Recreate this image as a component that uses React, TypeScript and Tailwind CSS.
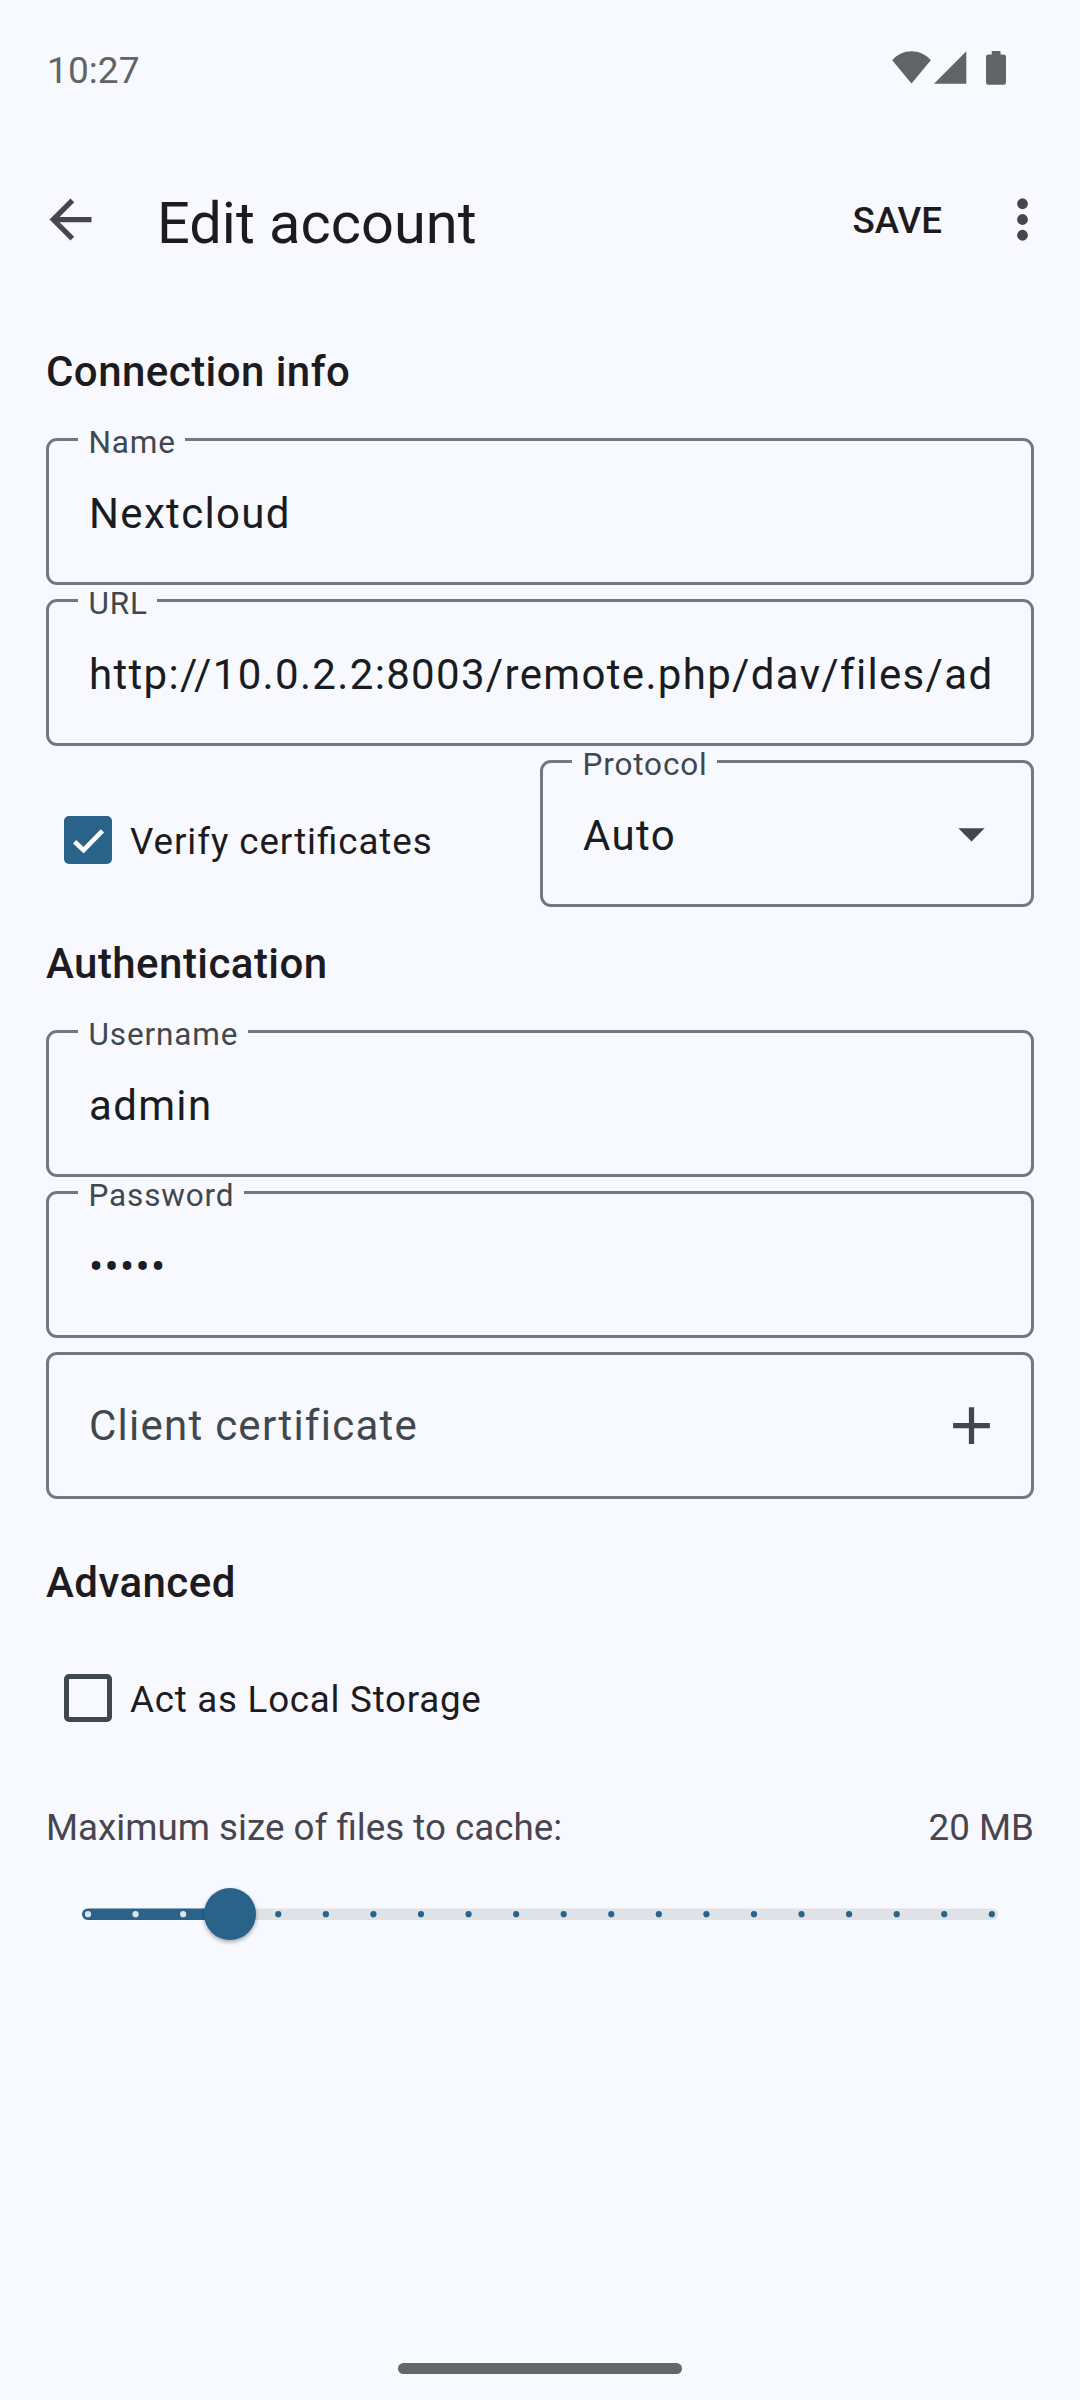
import type { ReactNode } from "react";

function Heading({ children, className = "" }: { children: ReactNode; className?: string }) {
  return (
    <h2 className={`h-[60px] text-[42px] leading-[60px] font-medium tracking-[0.45px] text-[#1d1b20] ${className}`}>
      {children}
    </h2>
  );
}

function Field({ label, children, className = "" }: { label?: string; children: ReactNode; className?: string }) {
  return (
    <div className={`relative flex h-[147px] items-center rounded-[11px] border-3 border-[#71787e] pt-1 pr-[39px] pl-10 ${className}`}>
      {label && (
        <span className="absolute top-[-10px] left-[29px] bg-[#f8f9ff] pr-[9.5px] pl-[10.5px] text-[31.5px] leading-6 tracking-[0.85px] text-[#41484d]">
          {label}
        </span>
      )}
      {children}
    </div>
  );
}

function Value({ children }: { children: ReactNode }) {
  return (
    <span className="flex-1 overflow-hidden text-[42px] leading-[60px] tracking-[1.33px] whitespace-nowrap text-[#191c20]">
      {children}
    </span>
  );
}

function CheckRow({ checked, children, className = "" }: { checked?: boolean; children: ReactNode; className?: string }) {
  return (
    <div className={`flex h-[126px] items-center pl-[18px] ${className}`}>
      {checked ? (
        <span className="flex size-12 items-center justify-center rounded-[5px] bg-[#29638a]">
          <svg width="31" height="24" viewBox="0 0 31 24" fill="none" className="mt-0.5">
            <path d="M1.6 12.8 L10.6 21.2 L29.4 1.8" stroke="white" strokeWidth="4.6" />
          </svg>
        </span>
      ) : (
        <span className="size-12 rounded-[5px] border-5 border-[#41484d]" />
      )}
      <span className="mt-[3px] ml-[18px] text-[36.75px] leading-[50px] text-[#1d1b20] [font-feature-settings:'liga'_1]">
        {children}
      </span>
    </div>
  );
}

const TICKS = Array.from({ length: 20 }, (_, i) => i);
const CURRENT = 3;
const tickX = (i: number) => 42 + i * 47.57;

export default function App() {
  return (
    <div className="flex h-[2400px] w-[1080px] flex-col bg-[#f8f9ff] font-[Roboto,sans-serif]">
      <div className="flex h-[140px] items-center pl-[47px] text-[#616466]">
        <span className="mt-0.5 text-[37px] leading-[50px] tracking-[0.1px]">10:27</span>
        <div className="-mt-1 mr-[74px] ml-auto flex items-center">
          <svg width="39" height="34" viewBox="0 0 39 34" fill="currentColor">
            <path d="M19.5 32.5 L0.2 9.2 C5.6 3.4 12.2 0.3 19.5 0.3 C26.8 0.3 33.4 3.4 38.8 9.2 Z" />
          </svg>
          <svg width="33" height="34" viewBox="0 0 33 34" fill="currentColor" className="ml-[3px]">
            <path d="M0 32.7 H32.3 V0.3 Z" />
          </svg>
          <svg width="20" height="34" viewBox="0 0 20 34" fill="currentColor" className="ml-[19px]">
            <path d="M5.7 0 H14.5 V3.4 H17.6 Q20 3.4 20 5.8 V31.4 Q20 33.8 17.6 33.8 H2.4 Q0 33.8 0 31.4 V5.8 Q0 3.4 2.4 3.4 H5.7 Z" />
          </svg>
        </div>
      </div>

      <div className="flex h-[158px] items-center pr-[26px] pl-10">
        <svg width="63" height="63" viewBox="0 0 24 24" fill="#49454f" className="-ml-px">
          <path d="M20 11H7.83l5.59-5.59L12 4l-8 8 8 8 1.41-1.41L7.83 13H20v-2z" />
        </svg>
        <h1 className="mt-[7px] ml-[55px] text-[57.75px] leading-[80px] text-[#1d1b20]">Edit account</h1>
        <span className="mt-1 ml-auto text-[36.75px] leading-[50px] font-medium text-[#1d1b20]">SAVE</span>
        <svg width="63" height="63" viewBox="0 0 24 24" fill="#49454f" className="ml-[49px]">
          <circle cx="12" cy="6" r="2.05" />
          <circle cx="12" cy="12" r="2.05" />
          <circle cx="12" cy="18" r="2.05" />
        </svg>
      </div>

      <div className="px-[46px]">
        <Heading className="mt-11 mb-9">Connection info</Heading>
        <div className="flex flex-col gap-[14px]">
          <Field label="Name"><Value>Nextcloud</Value></Field>
          <Field label="URL"><Value>http://10.0.2.2:8003/remote.php/dav/files/ad</Value></Field>
          <div className="grid grid-cols-2">
            <div className="flex items-center pt-[13px]">
              <CheckRow checked className="tracking-[0.93px]">Verify certificates</CheckRow>
            </div>
            <Field label="Protocol">
              <Value>Auto</Value>
              <svg width="63" height="63" viewBox="0 0 24 24" fill="#41484d" className="-mt-1 mr-[-11px]">
                <path d="M7 10l5 5 5-5z" />
              </svg>
            </Field>
          </div>
        </div>

        <Heading className="mt-[27px] mb-9">Authentication</Heading>
        <div className="flex flex-col gap-[14px]">
          <Field label="Username"><Value>admin</Value></Field>
          <Field label="Password"><Value>•••••</Value></Field>
          <Field>
            <span className="-mt-[3px] flex-1 text-[42px] leading-[60px] tracking-[1.25px] text-[#41484d]">Client certificate</span>
            <svg width="63" height="63" viewBox="0 0 24 24" fill="#41484d" className="-mt-1 mr-[-11px]">
              <path d="M19 13h-6v6h-2v-6H5v-2h6V5h2v6h6v2z" />
            </svg>
          </Field>
        </div>

        <Heading className="mt-[54px] mb-[22px]">Advanced</Heading>
        <CheckRow className="tracking-[0.74px]">Act as Local Storage</CheckRow>
        <div className="mt-[37px] flex h-[60px] items-center justify-between text-[36.75px] text-[#49454f]">
          <span>Maximum size of files to cache:</span>
          <span>20 MB</span>
        </div>
        <svg width="988" height="64" viewBox="0 0 988 64" className="mt-[26px] overflow-visible">
          <rect x="36" y="24.5" width="916" height="11.5" rx="5.75" fill="#dfe3e7" />
          <rect x="36" y="24.5" width="154" height="11.5" rx="5.75" fill="#29638a" />
          {TICKS.map((i) => (
            <circle key={i} cx={tickX(i)} cy="30.2" r="3.1" fill={i < CURRENT ? "#dfe3e7" : "#29638a"} />
          ))}
          <circle cx="184" cy="30" r="26" fill="#29638a" className="drop-shadow-[0_2px_2px_rgba(0,0,0,0.35)]" />
        </svg>
      </div>

      <div className="mx-auto mt-auto mb-[26px] h-[11px] w-[284px] rounded-full bg-[#646668]" />
    </div>
  );
}
